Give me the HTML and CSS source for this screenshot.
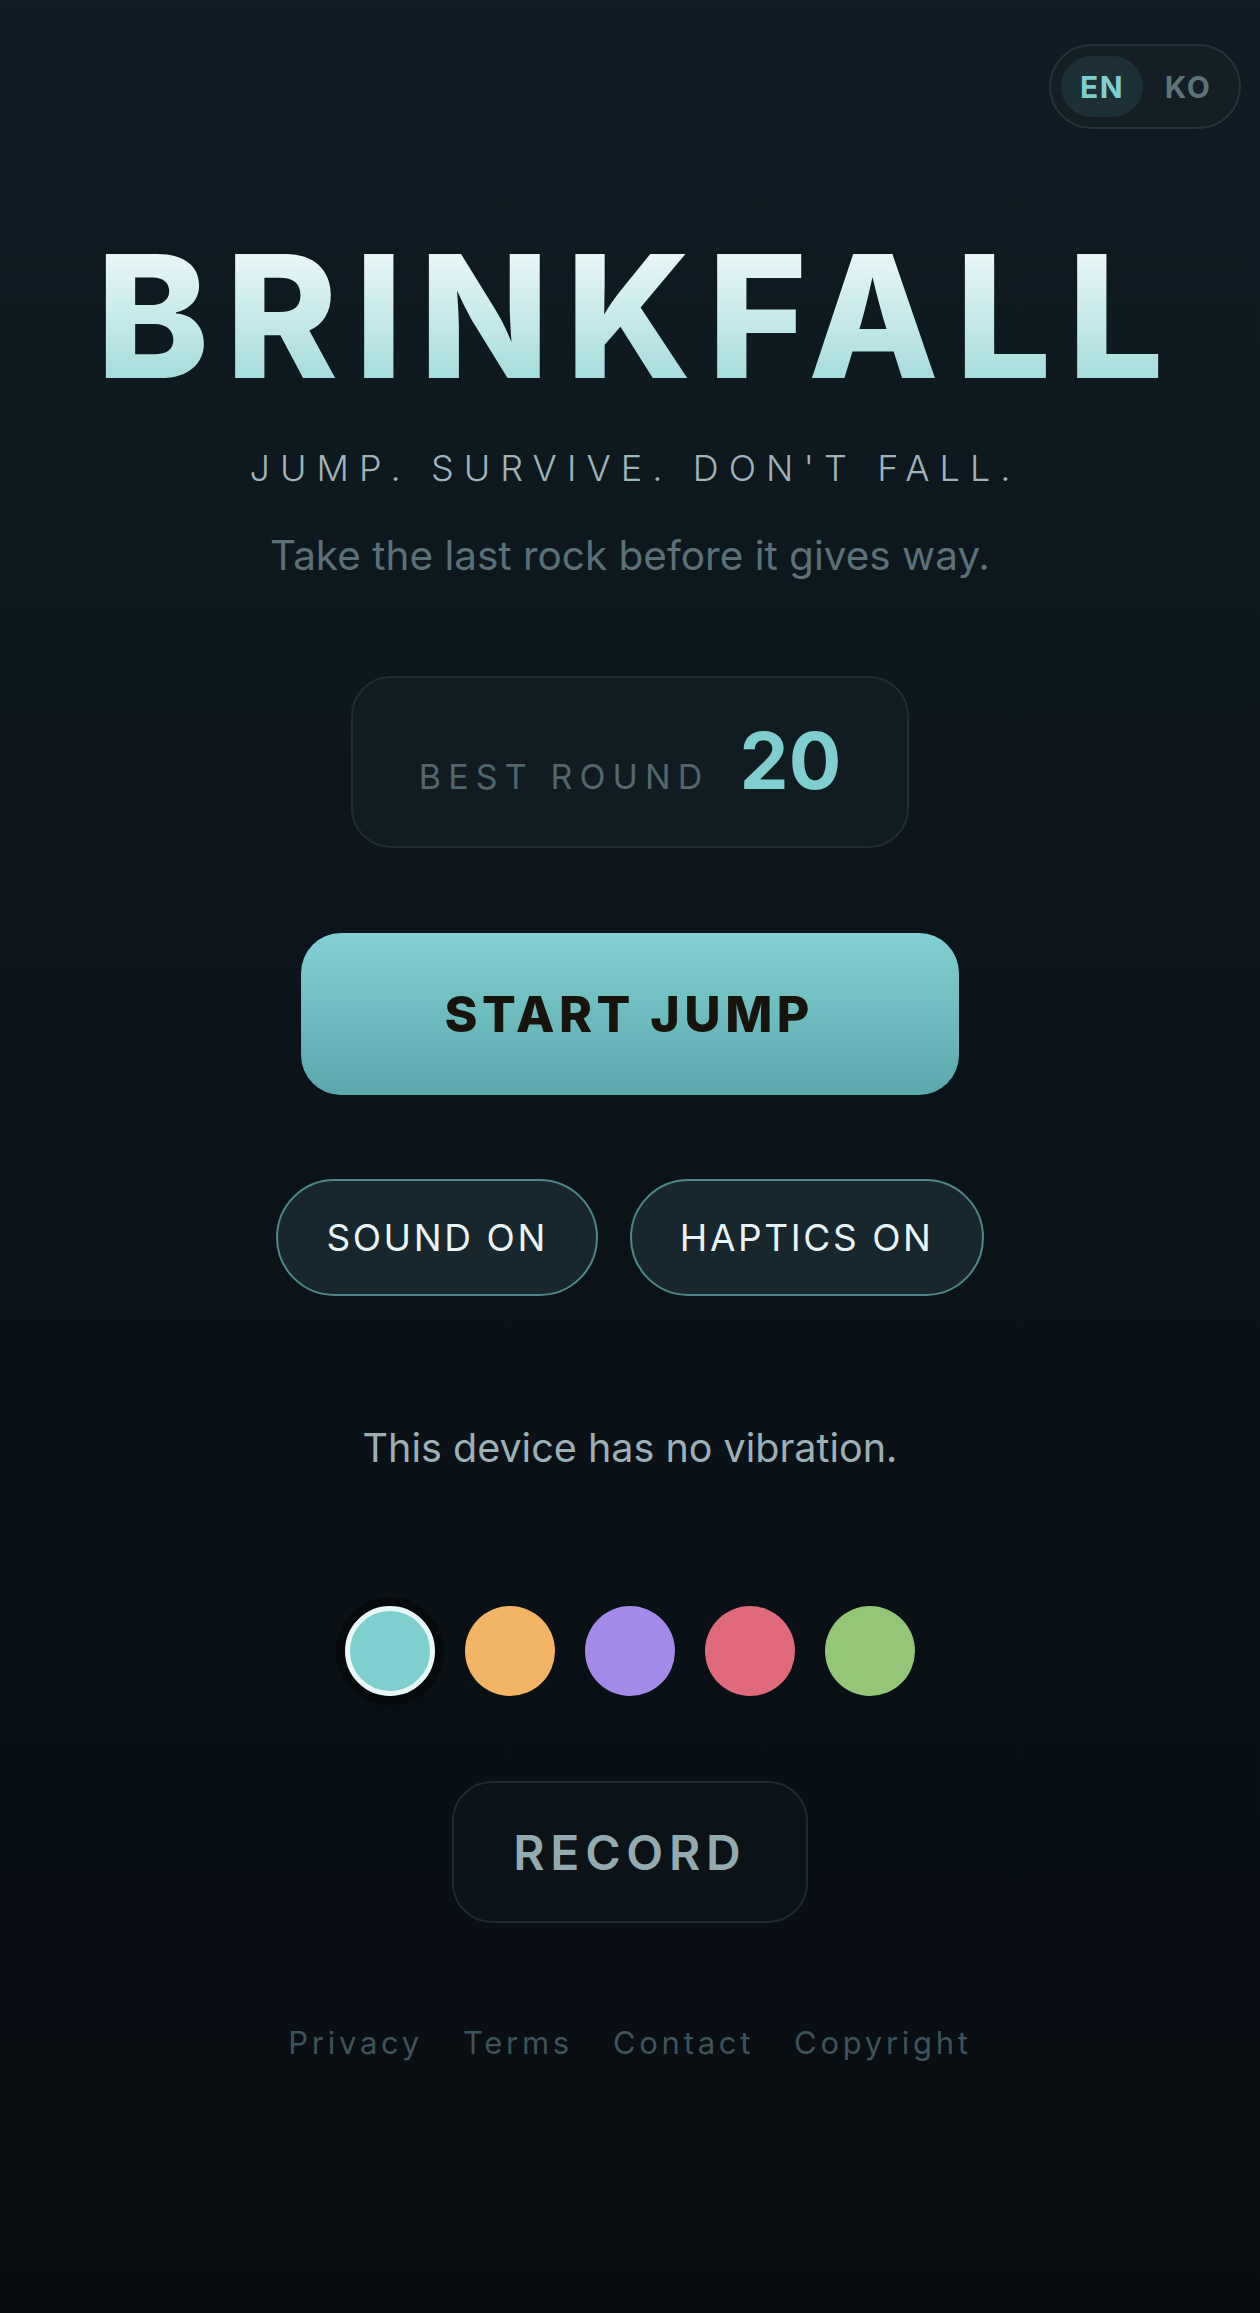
FILE: index.html
```html
<!DOCTYPE html>
<html lang="en">
<head>
    <meta charset="UTF-8">
    <meta name="viewport" content="width=device-width, initial-scale=1.0">
    <title>Brinkfall</title>
    <link rel="stylesheet" href="styles.css">
</head>
<body>
    <div class="page">
        <header class="topbar">
            <div class="lang-switch">
                <button class="lang active">EN</button>
                <button class="lang">KO</button>
            </div>
        </header>

        <main class="menu">
            <h1 class="title">BRINKFALL</h1>
            <p class="tagline">JUMP. SURVIVE. DON'T FALL.</p>
            <p class="subtitle">Take the last rock before it gives way.</p>

            <div class="best-card">
                <span class="best-label">BEST ROUND</span>
                <span class="best-value">20</span>
            </div>

            <button class="start-btn">START JUMP</button>

            <div class="toggles">
                <button class="toggle">SOUND ON</button>
                <button class="toggle">HAPTICS ON</button>
            </div>

            <p class="notice">This device has no vibration.</p>

            <!-- skin colours -->
            <div class="swatches">
                <button class="swatch selected" style="background: #7fcfcf;"></button>
                <button class="swatch" style="background: #f2b565;"></button>
                <button class="swatch" style="background: #a48ae8;"></button>
                <button class="swatch" style="background: #e06a7c;"></button>
                <button class="swatch" style="background: #93c677;"></button>
            </div>

            <button class="record-btn">RECORD</button>

            <nav class="footer-links">
                <a href="#">Privacy</a>
                <a href="#">Terms</a>
                <a href="#">Contact</a>
                <a href="#">Copyright</a>
            </nav>
        </main>
    </div>
</body>
</html>
```
FILE: styles.css
```css
* {
    box-sizing: border-box;
}
html, body {
    margin: 0;
    padding: 0;
}
body {
    min-height: 100vh;
    background: linear-gradient(180deg, #0f1c23 0%, #0b141a 45%, #080d11 100%);
    font-family: Inter, "Noto Sans", sans-serif;
    color: #e6f2f4;
}
button {
    font-family: inherit;
    cursor: pointer;
}
.page {
    min-height: 2313px;
    padding: 44px 19px 0 19px;
}
.topbar {
    display: flex;
    justify-content: flex-end;
}
.lang-switch {
    display: flex;
    gap: 4px;
    padding: 10px;
    background: #131e25;
    border: 2px solid #25333a;
    border-radius: 999px;
}
.lang {
    width: 82px;
    height: 61px;
    border: none;
    border-radius: 999px;
    background: transparent;
    color: #5d737a;
    font-size: 30px;
    font-weight: 700;
    letter-spacing: 0.05em;
}
.lang.active {
    background: #1d3037;
    color: #7fcfd0;
}
.menu {
    display: flex;
    flex-direction: column;
    align-items: center;
}
.title {
    margin: 102px 0 0 0;
    padding-left: 0.096em;
    font-size: 170px;
    line-height: 1;
    font-weight: 800;
    letter-spacing: 0.096em;
    background: linear-gradient(180deg, #ecf8f9 10%, #a3dbdb 90%);
    -webkit-background-clip: text;
    background-clip: text;
    color: transparent;
}
.tagline {
    margin: 49px 0 0 0;
    padding-left: 0.28em;
    font-size: 36px;
    line-height: 1;
    font-weight: 300;
    letter-spacing: 0.28em;
    color: #a0b3ba;
}
.subtitle {
    margin: 50px 0 0 0;
    font-size: 40.5px;
    line-height: 1;
    color: #5b7078;
}
.best-card {
    display: flex;
    align-items: baseline;
    justify-content: center;
    gap: 30px;
    width: 558px;
    height: 172px;
    margin-top: 99px;
    padding-top: 44px;
    background: #111b22;
    border: 2px solid #212d34;
    border-radius: 40px;
}
.best-label {
    font-size: 34px;
    letter-spacing: 0.21em;
    color: #52666e;
}
.best-value {
    font-size: 78px;
    line-height: 1;
    font-weight: 700;
    color: #7fcfd0;
}
.start-btn {
    width: 658px;
    height: 162px;
    margin-top: 85px;
    border: none;
    border-radius: 40px;
    background: linear-gradient(180deg, #82d0d1 0%, #5aa8ad 100%);
    color: #17140d;
    font-size: 50px;
    font-weight: 800;
    letter-spacing: 0.09em;
    padding-left: 0.09em;
}
.toggles {
    display: flex;
    gap: 32px;
    margin-top: 84px;
}
.toggle {
    height: 117px;
    padding: 0 48px;
    background: #18272d;
    border: 2px solid #4f8689;
    border-radius: 999px;
    color: #e8f4f6;
    font-size: 37px;
    letter-spacing: 0.07em;
}
.notice {
    margin: 133px 0 0 0;
    font-size: 39.5px;
    line-height: 1;
    color: #9db0b7;
}
.swatches {
    display: flex;
    gap: 30px;
    margin-top: 138px;
}
.swatch {
    width: 90px;
    height: 90px;
    padding: 0;
    border: none;
    border-radius: 50%;
}
.swatch.selected {
    border: 5px solid #e9f7f8;
    box-shadow: 0 0 0 9px #060a0d;
}
.record-btn {
    width: 356px;
    height: 142px;
    margin-top: 85px;
    background: #0b1218;
    border: 2px solid #1f2a31;
    border-radius: 40px;
    color: #93aab0;
    font-size: 48px;
    font-weight: 600;
    letter-spacing: 0.12em;
    padding-left: 0.12em;
}
.footer-links {
    display: flex;
    gap: 40px;
    margin-top: 104px;
}
.footer-links a {
    font-size: 31px;
    line-height: 1;
    letter-spacing: 0.12em;
    color: #3f535b;
    text-decoration: none;
}
```
